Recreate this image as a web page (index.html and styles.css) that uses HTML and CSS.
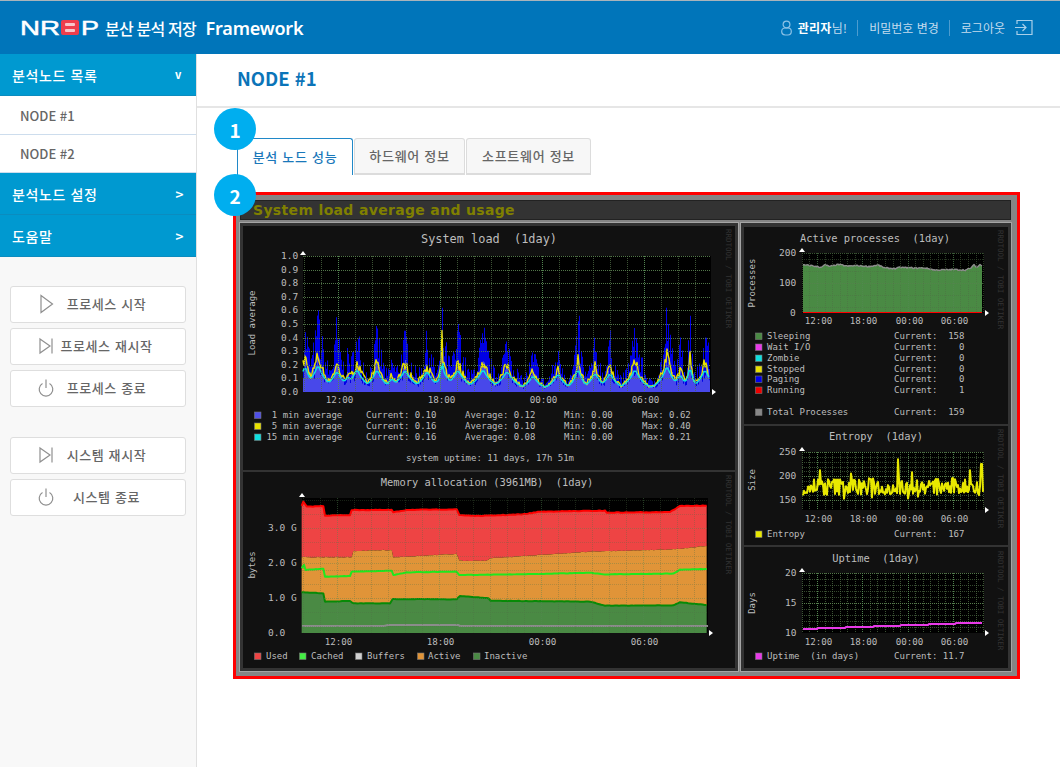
FILE: index.html
```html
<!DOCTYPE html>
<html lang="ko">
<head>
    <meta charset="UTF-8">
    <meta name="viewport" content="width=device-width, initial-scale=1.0">
    <title>NRBP 분산 분석 저장 Framework</title>
    <link rel="stylesheet" href="styles.css">
</head>
<body>
    <header class="topbar">
        <div class="brand">
            <svg class="brand-logo" width="81" height="26" viewBox="0 0 81 26">
                <text x="0" y="20" textLength="40" lengthAdjust="spacingAndGlyphs">NR</text>
                <rect x="41" y="5" width="18" height="15" rx="2" fill="#ee3d4d"/>
                <rect x="45" y="8" width="10" height="3" rx="1" fill="#f7c5ca"/>
                <rect x="45" y="14" width="10" height="3" rx="1" fill="#f7c5ca"/>
                <text x="61" y="20" textLength="18" lengthAdjust="spacingAndGlyphs">P</text>
            </svg>
            <span class="brand-name">분산 분석 저장 <em>Framework</em></span>
        </div>
        <div class="usermenu">
            <svg class="user-icon" width="11" height="16" viewBox="0 0 11 16">
                <circle cx="5.500" cy="4.500" r="3.400"/>
                <rect x="0.700" y="8" width="9.600" height="7" rx="3.400"/>
            </svg>
            <span class="user-name"><b>관리자</b>님!</span>
            <a class="usermenu-link" href="#">비밀번호 변경</a>
            <a class="usermenu-link" href="#">로그아웃</a>
            <svg class="logout-icon" width="19" height="17" viewBox="0 0 19 17">
                <path d="M3 5V1.500H18V15.500H3V12"/>
                <path d="M1 8.500H12M8.500 5L12 8.500L8.500 12"/>
            </svg>
        </div>
    </header>

    <div class="page">
        <aside class="sidebar">
            <nav class="sidenav">
                <a class="sidenav-head" href="#"><span>분석노드 목록</span><i class="open">v</i></a>
                <a class="sidenav-item" href="#">NODE #1</a>
                <a class="sidenav-item" href="#">NODE #2</a>
                <a class="sidenav-head" href="#"><span>분석노드 설정</span><i>&gt;</i></a>
                <a class="sidenav-head" href="#"><span>도움말</span><i>&gt;</i></a>
            </nav>

            <div class="btn-group">
                <button class="side-btn">
                    <svg width="20" height="20" viewBox="0 0 20 20"><path d="M5 1.500L16.500 10L5 18.500Z"/></svg>
                    <span>프로세스 시작</span>
                </button>
                <button class="side-btn">
                    <svg width="20" height="20" viewBox="0 0 20 20"><path d="M4 3L14 10L4 17Z"/><path d="M16 2.500V17.500"/></svg>
                    <span>프로세스 재시작</span>
                </button>
                <button class="side-btn">
                    <svg width="20" height="20" viewBox="0 0 20 20"><path d="M6.500 5.500A6.800 6.800 0 1 0 13.500 5.500"/><path d="M10 1.500V10"/></svg>
                    <span>프로세스 종료</span>
                </button>
            </div>
            <div class="btn-group">
                <button class="side-btn">
                    <svg width="20" height="20" viewBox="0 0 20 20"><path d="M4 3L14 10L4 17Z"/><path d="M16 2.500V17.500"/></svg>
                    <span>시스템 재시작</span>
                </button>
                <button class="side-btn">
                    <svg width="20" height="20" viewBox="0 0 20 20"><path d="M6.500 5.500A6.800 6.800 0 1 0 13.500 5.500"/><path d="M10 1.500V10"/></svg>
                    <span>시스템 종료</span>
                </button>
            </div>
        </aside>

        <main class="main">
            <h1 class="main-title">NODE #1</h1>
            <div class="content">
                <span class="badge badge-tabs">1</span>
                <span class="badge badge-graphs">2</span>

                <div class="tabs">
                    <a class="tab active" href="#">분석 노드 성능</a>
                    <a class="tab" href="#">하드웨어 정보</a>
                    <a class="tab" href="#">소프트웨어 정보</a>
                </div>

                <section class="shot">
                    <h2 class="shot-title">System load average and usage</h2>
                    <div class="shot-body">
                        <div class="shot-col">
                            <svg id="g-load" class="graph" width="492" height="244" viewBox="243 226 492 244"></svg>
                            <svg id="g-mem" class="graph" width="492" height="196" viewBox="243 472 492 196"></svg>
                        </div>
                        <div class="shot-col right">
                            <svg id="g-proc" class="graph" width="264" height="197" viewBox="744 227 264 197"></svg>
                            <svg id="g-entropy" class="graph" width="264" height="119" viewBox="744 426 264 119"></svg>
                            <svg id="g-uptime" class="graph" width="264" height="121" viewBox="744 547 264 121"></svg>
                        </div>
                    </div>
                </section>
            </div>
        </main>
    </div>

    <script src="charts.js"></script>
</body>
</html>
```

FILE: styles.css
```css
* {
    box-sizing: border-box;
}
html, body {
    margin: 0;
    height: 100%;
    overflow: hidden;
}
body {
    font-family: "Noto Sans CJK KR", "Noto Sans", sans-serif;
    color: #666;
    background: #fff;
}
a {
    text-decoration: none;
    color: inherit;
}

/* top bar */
.topbar {
    height: 54px;
    background: #0075ba;
    border-top: 1px solid #a9b4bb;
    display: flex;
    align-items: center;
    justify-content: space-between;
    padding: 0 27px 0 20px;
}
.brand {
    display: flex;
    align-items: center;
    gap: 4px;
}
.brand-logo text {
    font-family: "Liberation Sans", sans-serif;
    font-size: 21px;
    fill: #fff;
    stroke: #fff;
    stroke-width: 0.5;
}
.brand-name {
    color: #fff;
    font-size: 16px;
    font-weight: 500;
    letter-spacing: -0.8px;
    white-space: nowrap;
}
.brand-name em {
    font-family: "Noto Sans", sans-serif;
    font-style: normal;
    font-size: 18px;
    font-weight: 600;
    margin-left: 6px;
    letter-spacing: -0.2px;
}
.usermenu {
    display: flex;
    align-items: center;
    font-size: 12px;
    color: #c4dcee;
}
.user-icon {
    fill: none;
    stroke: #8cc2e6;
    stroke-width: 1.2;
    margin-right: 6px;
}
.user-name {
    letter-spacing: 0.3px;
}
.user-name b {
    color: #fff;
}
.usermenu-link {
    margin-left: 10px;
    padding-left: 11px;
    border-left: 1px solid #4d9ccf;
    line-height: 16px;
}
.logout-icon {
    fill: none;
    stroke: #a9d0ea;
    stroke-width: 1.2;
    margin-left: 9px;
}

.page {
    display: flex;
    height: calc(100% - 54px);
}

/* left side */
.sidebar {
    width: 197px;
    flex: none;
    background: #f8f8f8;
    border-right: 1px solid #e0e0e0;
}
.sidenav-head {
    height: 42px;
    display: flex;
    align-items: center;
    justify-content: space-between;
    padding: 0 12px;
    background: #0099d0;
    border-bottom: 1px solid #0b8cbf;
    color: #fff;
    font-size: 14px;
    font-weight: 500;
    letter-spacing: 0.6px;
}
.sidenav-head i {
    font-style: normal;
    font-weight: 700;
    font-size: 13.500px;
}
.sidenav-head i.open {
    font-size: 11px;
    margin: -2px 2px 0 0;
}
.sidenav-item {
    height: 38.500px;
    display: flex;
    align-items: center;
    padding: 1px 0 0 20px;
    background: #fff;
    border-bottom: 1px solid #cddded;
    font-size: 13px;
    font-weight: 500;
}
.btn-group {
    display: flex;
    flex-direction: column;
    gap: 5px;
    padding: 0 10px;
    margin-top: 30px;
}
.sidenav + .btn-group {
    margin-top: 29px;
}
.side-btn {
    width: 176px;
    height: 37px;
    display: flex;
    align-items: center;
    padding: 0 28px 2px 25px;
    background: #fff;
    border: 1px solid #dedede;
    border-radius: 3px;
    color: #666;
    font-family: inherit;
    font-size: 13px;
    font-weight: 500;
    letter-spacing: 0.6px;
    cursor: pointer;
}
.side-btn span {
    flex: 1;
    text-align: center;
    white-space: nowrap;
}
.side-btn svg {
    flex: none;
    fill: none;
    stroke: #8f8f8f;
    stroke-width: 1.2;
}

/* main area */
.main {
    flex: 1;
    min-width: 0;
}
.main-title {
    height: 54px;
    margin: 0;
    padding: 0 0 5px 40px;
    display: flex;
    align-items: center;
    color: #0b74b8;
    font-size: 18.500px;
    font-weight: 700;
    border-bottom: 2px solid #e6e6e6;
}
.content {
    position: relative;
    padding: 30px 0 0 36px;
}
.badge {
    position: absolute;
    left: 17px;
    width: 42px;
    height: 42px;
    border-radius: 50%;
    background: #00aeef;
    color: #fff;
    font-size: 19px;
    font-weight: 700;
    display: flex;
    align-items: center;
    justify-content: center;
    z-index: 2;
}
.badge-tabs {
    top: 0;
}
.badge-graphs {
    top: 66px;
}
.tabs {
    display: flex;
    margin-left: 4px;
    height: 37px;
}
.tab {
    display: flex;
    align-items: center;
    justify-content: center;
    width: 111px;
    margin-right: 1px;
    padding-bottom: 2px;
    background: #f7f7f7;
    border: 1px solid #dcdcdc;
    border-bottom-width: 2px;
    border-radius: 3px 3px 0 0;
    font-size: 13px;
    font-weight: 500;
    letter-spacing: 0.7px;
}
.tab:last-child {
    width: 125px;
}
.tab.active {
    width: 116px;
    background: #fff;
    color: #1a78ba;
    border-color: #2088c8;
    border-bottom: 0;
}

/* captured graph page */
.shot {
    width: 787px;
    height: 487px;
    margin-top: 17px;
    border: 3px solid #f00;
    background: #858585;
    padding: 6px 6px 5px 4px;
}
.shot-title {
    height: 18px;
    margin: 0 1px;
    padding-left: 12px;
    background: #333;
    color: #808000;
    font-family: "DejaVu Sans", sans-serif;
    font-size: 14px;
    font-weight: 700;
    line-height: 18px;
    letter-spacing: 0.33px;
    box-shadow: 0 0 0 1px #222;
}
.shot-body {
    display: grid;
    grid-template-columns: 498px 270px;
    gap: 3px;
    margin-top: 4px;
}
.shot-col {
    height: 448px;
    display: flex;
    flex-direction: column;
    gap: 2px;
    padding: 3px;
    background: #333;
    box-shadow: 0 0 0 1px #a5a5a5;
}
.shot-col.right {
    padding-top: 4px;
}
.graph {
    display: block;
    flex: none;
    background: #111;
}
.graph text {
    font-family: "DejaVu Sans Mono", monospace;
    font-size: 9px;
    fill: #bdbdbd;
    white-space: pre;
}
.graph text.title {
    font-size: 10.400px;
    text-anchor: middle;
}
.graph text.title-big {
    font-size: 11.900px;
}
.graph text.axis {
    font-size: 9.500px;
}
.graph text.time {
    font-size: 9.200px;
    text-anchor: middle;
}
.graph text.mark {
    font-size: 7.500px;
    fill: #333;
}
```

FILE: charts.js
```javascript
// draws the rrdtool style graphs, coordinates are page pixels (see viewBox)
var seed = 7;
function rnd() {
    seed = (seed * 16807) % 2147483647;
    return (seed - 1) / 2147483646;
}

function add(svg, tag, attrs, text) {
    var el = document.createElementNS('http://www.w3.org/2000/svg', tag);
    for (var k in attrs) el.setAttribute(k, attrs[k]);
    if (text) el.textContent = text;
    svg.appendChild(el);
    return el;
}
function label(svg, x, y, str, cls) {
    return add(svg, 'text', { x: x, y: y + 3, 'class': cls || '' }, str);
}
function line(svg, x1, y1, x2, y2, color, dots) {
    add(svg, 'line', { x1: x1, y1: y1, x2: x2, y2: y2, stroke: color, 'stroke-width': 1, 'stroke-dasharray': dots ? '1 1' : 'none' });
}
function pts(list) {
    return list.map(function (p) { return p[0] + ',' + p[1]; }).join(' ');
}
function area(svg, top, bottom, color) {
    // bottom: y number or a list of points
    var back = typeof bottom === 'number'
        ? [[top[top.length - 1][0], bottom], [top[0][0], bottom]]
        : bottom.slice().reverse();
    add(svg, 'polygon', { points: pts(top.concat(back)), fill: color });
}
function stroke(svg, list, color, w) {
    add(svg, 'polyline', { points: pts(list), fill: 'none', stroke: color, 'stroke-width': w || 1, 'stroke-linejoin': 'round' });
}
function swatch(svg, x, y, color) {
    add(svg, 'rect', { x: x + 0.5, y: y - 3, width: 6.5, height: 6.5, fill: color, stroke: '#777', 'stroke-width': 0.6 });
}
function yTitle(svg, x, y, str) {
    add(svg, 'text', { transform: 'translate(' + x + ' ' + y + ') rotate(-90)', 'text-anchor': 'middle' }, str);
}
function rrdMark(svg, x, y) {
    add(svg, 'text', { transform: 'translate(' + x + ' ' + y + ') rotate(90)', 'class': 'mark' }, 'RRDTOOL / TOBI OETIKER');
}
// sample a knot list every 2px with a bit of noise
function rough(list, amp) {
    var out = [];
    for (var k = 0; k < list.length - 1; k++) {
        var a = list[k], c = list[k + 1];
        var n = Math.max(1, Math.round((c[0] - a[0]) / 2));
        for (var i = 0; i < n; i++) {
            var t = i / n;
            out.push([a[0] + (c[0] - a[0]) * t, a[1] + (c[1] - a[1]) * t + (rnd() - .5) * amp]);
        }
    }
    out.push(list[list.length - 1]);
    return out;
}

// black plot area, grid and arrows
function backdrop(svg, b) {
    add(svg, 'rect', { x: b.x1, y: b.y1, width: b.x2 - b.x1, height: b.y2 - b.y1, fill: '#000' });
}
function grid(svg, b, o) {
    var g = add(svg, 'g', { opacity: o.fade || 1 });
    var i, x;
    for (i = -5; i < 30; i++) {
        x = Math.round(b.h12 + i * o.hour) + 0.5;
        if (x >= b.x1 && x <= b.x2) line(g, x, b.y1, x, b.y2, 'rgba(80,110,70,.75)', true);
    }
    o.minor.forEach(function (y) { line(g, b.x1, Math.round(y) + 0.5, b.x2, Math.round(y) + 0.5, 'rgba(80,110,70,.65)', true); });
    o.major.forEach(function (y) { line(g, b.x1, Math.round(y) + 0.5, b.x2, Math.round(y) + 0.5, 'rgba(90,130,80,.9)', true); });
    for (i = 0; i < 4; i++) {
        x = Math.round(b.h12 + i * o.hour * 6) + 0.5;
        line(g, x, b.y1, x, b.y2, 'rgba(85,140,85,.85)', true);
        label(svg, x + 1, o.timeY, ['12:00', '18:00', '00:00', '06:00'][i], 'time');
    }
    // axis arrows
    add(svg, 'polygon', { points: (b.x1 - 3) + ',' + (b.y1 - 1) + ' ' + (b.x1 + 3) + ',' + (b.y1 - 1) + ' ' + b.x1 + ',' + (b.y1 - 5), fill: '#fff' });
    add(svg, 'polygon', { points: (b.x2 + 1) + ',' + (b.y2 - 3) + ' ' + (b.x2 + 1) + ',' + (b.y2 + 3) + ' ' + (b.x2 + 5) + ',' + b.y2, fill: '#fff' });
}
function range(from, to, step) {
    var out = [];
    for (var y = from; y <= to; y += step) out.push(y);
    return out;
}

// system load
(function () {
    var svg = document.getElementById('g-load');
    var b = { x1: 303, x2: 711, y1: 256, y2: 392, h12: 338 };
    var zero = 392, scale = 136;
    backdrop(svg, b);

    var humps = [[305, .28, 7], [318, .29, 9], [337, .22, 9], [348, .16, 8], [357, .24, 9], [377, .24, 8], [392, .14, 7], [405, .23, 10], [427, .22, 9],
        [442, .4, 2], [444, .2, 10], [458, .23, 10], [483, .24, 10], [507, .22, 10], [533, .17, 8], [558, .19, 8], [578, .25, 6],
        [595, .2, 8], [610, .2, 8], [635, .24, 9], [667, .28, 8], [680, .18, 8], [690, .28, 4], [705, .24, 8]];
    var spikes = [[305, .44], [318, .6], [336, .55], [334, .35], [357, .3], [375, .38], [405, .45], [427, .31], [442, .62],
        [458, .5], [460, .42], [483, .36], [507, .3], [533, .22], [558, .3], [579, .56], [595, .3], [609, .38], [634, .47], [637, .36],
        [666, .62], [668, .5], [688, .38], [705, .4]];
    function hump(x) {
        var v = 0;
        humps.forEach(function (h) {
            v = Math.max(v, h[1] * Math.exp(-Math.abs(x - h[0]) / h[2]));
        });
        return v;
    }
    var blue = [], soft = [], yel = [], cy = [];
    for (var x = 303; x <= 709; x++) {
        var h = hump(x);
        var j = rnd();
        var sp = h * (.8 + j * 1.5);
        spikes.forEach(function (s) { if (s[0] === x) sp = s[1]; });
        blue.push([x, zero - sp * scale], [x + 1, zero - sp * scale]);
        var s2 = h * (.45 + j * .6);
        soft.push([x, zero - s2 * scale], [x + 1, zero - s2 * scale]);
        yel.push([x, zero - (h * (.72 + rnd() * .42)) * scale]);
        cy.push([x, zero - ((hump(x - 1) + hump(x + 1)) * .33 + .01) * scale]);
    }
    area(svg, blue, zero, '#0000e6');
    area(svg, soft, zero, '#4848ea');
    stroke(svg, yel, '#e8e000', 1.4);
    stroke(svg, cy, '#10dede', 1.5);
    grid(svg, b, { hour: 17, minor: [], major: range(256, 380, 13.6), timeY: 400 });

    label(svg, 489, 240, 'System load  (1day)', 'title title-big');
    for (var i = 0; i <= 10; i++) label(svg, 281, 392 - i * 13.6, (i / 10).toFixed(1), 'axis');
    yTitle(svg, 255, 323, 'Load average');
    rrdMark(svg, 726, 229);

    var rows = [
        ['#5050e8', '  1 min average', '0.10', '0.12', '0.62', 415],
        ['#e8e000', '  5 min average', '0.16', '0.10', '0.40', 426],
        ['#10dede', ' 15 min average', '0.16', '0.08', '0.21', 437]
    ];
    rows.forEach(function (r) {
        swatch(svg, 254, r[5], r[0]);
        label(svg, 261, r[5], r[1]);
        label(svg, 366, r[5], 'Current: ' + r[2]);
        label(svg, 465, r[5], 'Average: ' + r[3]);
        label(svg, 564, r[5], 'Min: 0.00');
        label(svg, 642, r[5], 'Max: ' + r[4]);
    });
    label(svg, 406, 458, 'system uptime: 11 days, 17h 51m');
})();

// memory allocation
(function () {
    var svg = document.getElementById('g-mem');
    var b = { x1: 302, x2: 708, y1: 498, y2: 633, h12: 337 };
    // points read in 3x crop units
    function conv(list, amp) {
        return rough(list.map(function (p) { return [240 + p[0] / 3, 470 + p[1] / 3]; }), amp);
    }
    var used = conv([[185, 108], [190, 95], [200, 110], [250, 108], [255, 137], [330, 135], [335, 120], [455, 120], [460, 127], [500, 120], [650, 118], [658, 135], [710, 138], [850, 133], [900, 125], [1095, 122], [1100, 128], [1290, 126], [1320, 108], [1400, 107]], .5);
    var active = conv([[185, 262], [335, 262], [340, 243], [455, 240], [460, 262], [650, 252], [658, 272], [740, 272], [750, 265], [900, 255], [1050, 245], [1300, 238], [1400, 228]], .7);
    var cached = conv([[185, 295], [192, 285], [197, 300], [250, 296], [255, 320], [330, 318], [335, 305], [455, 302], [460, 315], [500, 307], [650, 305], [658, 315], [900, 312], [1050, 308], [1095, 313], [1300, 311], [1320, 299], [1400, 297]], .3);
    var inact = conv([[185, 367], [250, 370], [255, 395], [330, 393], [340, 400], [450, 400], [458, 387], [650, 388], [660, 378], [745, 385], [752, 392], [1050, 395], [1095, 407], [1300, 406], [1320, 397], [1400, 405]], .3);

    backdrop(svg, b);
    area(svg, used, active, '#ee4444');
    area(svg, active, inact, '#e09438');
    area(svg, inact, 633, '#4a8a44');
    stroke(svg, used, '#f00', 2);
    stroke(svg, cached, '#1ee81e', 2);
    stroke(svg, inact, '#078a07', 2);
    stroke(svg, [[302, 626], [384, 626], [388, 625], [458, 625], [460, 626], [708, 626]], '#8c8c8c', 2);
    grid(svg, b, { hour: 17, minor: range(500, 630, 14), major: [528, 563, 598], timeY: 642, fade: .45 });

    label(svg, 487, 483, 'Memory allocation (3961MB)  (1day)', 'title');
    label(svg, 268, 528, '3.0 G', 'axis');
    label(svg, 268, 563, '2.0 G', 'axis');
    label(svg, 268, 598, '1.0 G', 'axis');
    label(svg, 268, 633, '0.0', 'axis');
    yTitle(svg, 255, 565, 'bytes');
    rrdMark(svg, 726, 475);

    [[254, '#ee4444', 266, 'Used'], [299, '#44ee44', 311, 'Cached'], [355, '#d0d0d0', 367, 'Buffers'], [417, '#e09438', 428, 'Active'], [473, '#4a8a44', 484, 'Inactive']].forEach(function (r) {
        swatch(svg, r[0], 656, r[1]);
        label(svg, r[2], 656, r[3]);
    });
})();

// active processes
(function () {
    var svg = document.getElementById('g-proc');
    var b = { x1: 802, x2: 984, y1: 253, y2: 313, h12: 817 };
    backdrop(svg, b);
    var knots = [[803, 160], [812, 158], [820, 152], [825, 160], [830, 155], [838, 162], [848, 156], [855, 158], [870, 155], [878, 160], [885, 150], [895, 148], [900, 152], [915, 150], [925, 150], [935, 143], [955, 145], [965, 143], [970, 148], [974, 160], [977, 152], [980, 162], [982, 156]];
    var top = [];
    for (var x = 803; x <= 982; x++) {
        var k = 0;
        while (k < knots.length - 2 && knots[k + 1][0] < x) k++;
        var a = knots[k], c = knots[k + 1];
        var v = a[1] + (c[1] - a[1]) * (x - a[0]) / (c[0] - a[0]) + rnd() * 4 - 2;
        top.push([x, 313 - v * 0.3]);
    }
    area(svg, top, 313, '#4a8a44');
    stroke(svg, top, '#8c8c8c', 1.4);
    grid(svg, b, { hour: 7.55, minor: range(259, 307, 12), major: [253, 283], timeY: 321, fade: .7 });
    line(svg, 803, 312.5, 982, 312.5, '#f00');

    label(svg, 875, 239, 'Active processes  (1day)', 'title');
    label(svg, 779, 253, '200', 'axis');
    label(svg, 779, 283, '100', 'axis');
    label(svg, 790, 313, '0', 'axis');
    yTitle(svg, 755, 283, 'Processes');
    rrdMark(svg, 998, 230);

    [['#4a8a44', 'Sleeping', '  158', 336], ['#e83ae8', 'Wait I/O', '    0', 347], ['#10dede', 'Zombie', '    0', 358], ['#e8e000', 'Stopped', '    0', 369], ['#0000ee', 'Paging', '    0', 379], ['#ee0000', 'Running', '    1', 390], ['#888888', 'Total Processes', '  159', 412]].forEach(function (r) {
        swatch(svg, 755, r[3], r[0]);
        label(svg, 767, r[3], r[1]);
        label(svg, 894, r[3], 'Current:' + r[2]);
    });
})();

// entropy
(function () {
    var svg = document.getElementById('g-entropy');
    var b = { x1: 802, x2: 984, y1: 452, y2: 510, h12: 817 };
    backdrop(svg, b);
    var peaks = { 820: 212, 851: 205, 873: 195, 898: 235, 912: 208, 970: 212, 981: 225, 982: 225 };
    var list = [];
    for (var x = 803; x <= 983; x++) {
        var v = 160 + rnd() * 36 + (rnd() > .85 ? -8 : 0);
        if (x < 812) v = 158 + rnd() * 24;
        if (peaks[x]) v = peaks[x];
        list.push([x, 476 - (v - 200) * 0.48]);
    }
    list[list.length - 1][1] = 476 + 33 * 0.48;
    grid(svg, b, { hour: 7.55, minor: range(457, 505, 4.8), major: [452, 476, 500], timeY: 519 });
    stroke(svg, list, '#e8e800', 2);

    label(svg, 876, 437, 'Entropy  (1day)', 'title');
    label(svg, 779, 452, '250', 'axis');
    label(svg, 779, 476, '200', 'axis');
    label(svg, 779, 500, '150', 'axis');
    yTitle(svg, 755, 480, 'Size');
    rrdMark(svg, 998, 429);
    swatch(svg, 755, 534, '#e8e800');
    label(svg, 767, 534, 'Entropy');
    label(svg, 894, 534, 'Current:  167');
})();

// uptime
(function () {
    var svg = document.getElementById('g-uptime');
    var b = { x1: 802, x2: 984, y1: 573, y2: 633, h12: 817 };
    backdrop(svg, b);
    grid(svg, b, { hour: 7.55, minor: range(579, 627, 6), major: [573, 603], timeY: 642 });
    stroke(svg, [[803, 629], [817, 629], [818, 628], [845, 628], [846, 627], [873, 627], [874, 626], [900, 626], [901, 625], [928, 625], [929, 624], [955, 624], [956, 623], [982, 623]], '#e83ae8', 2);

    label(svg, 876, 559, 'Uptime  (1day)', 'title');
    label(svg, 785, 573, '20', 'axis');
    label(svg, 785, 603, '15', 'axis');
    label(svg, 785, 633, '10', 'axis');
    yTitle(svg, 755, 603, 'Days');
    rrdMark(svg, 998, 551);
    swatch(svg, 755, 656, '#e83ae8');
    label(svg, 767, 656, 'Uptime  (in days)');
    label(svg, 894, 656, 'Current: 11.7');
})();
```
